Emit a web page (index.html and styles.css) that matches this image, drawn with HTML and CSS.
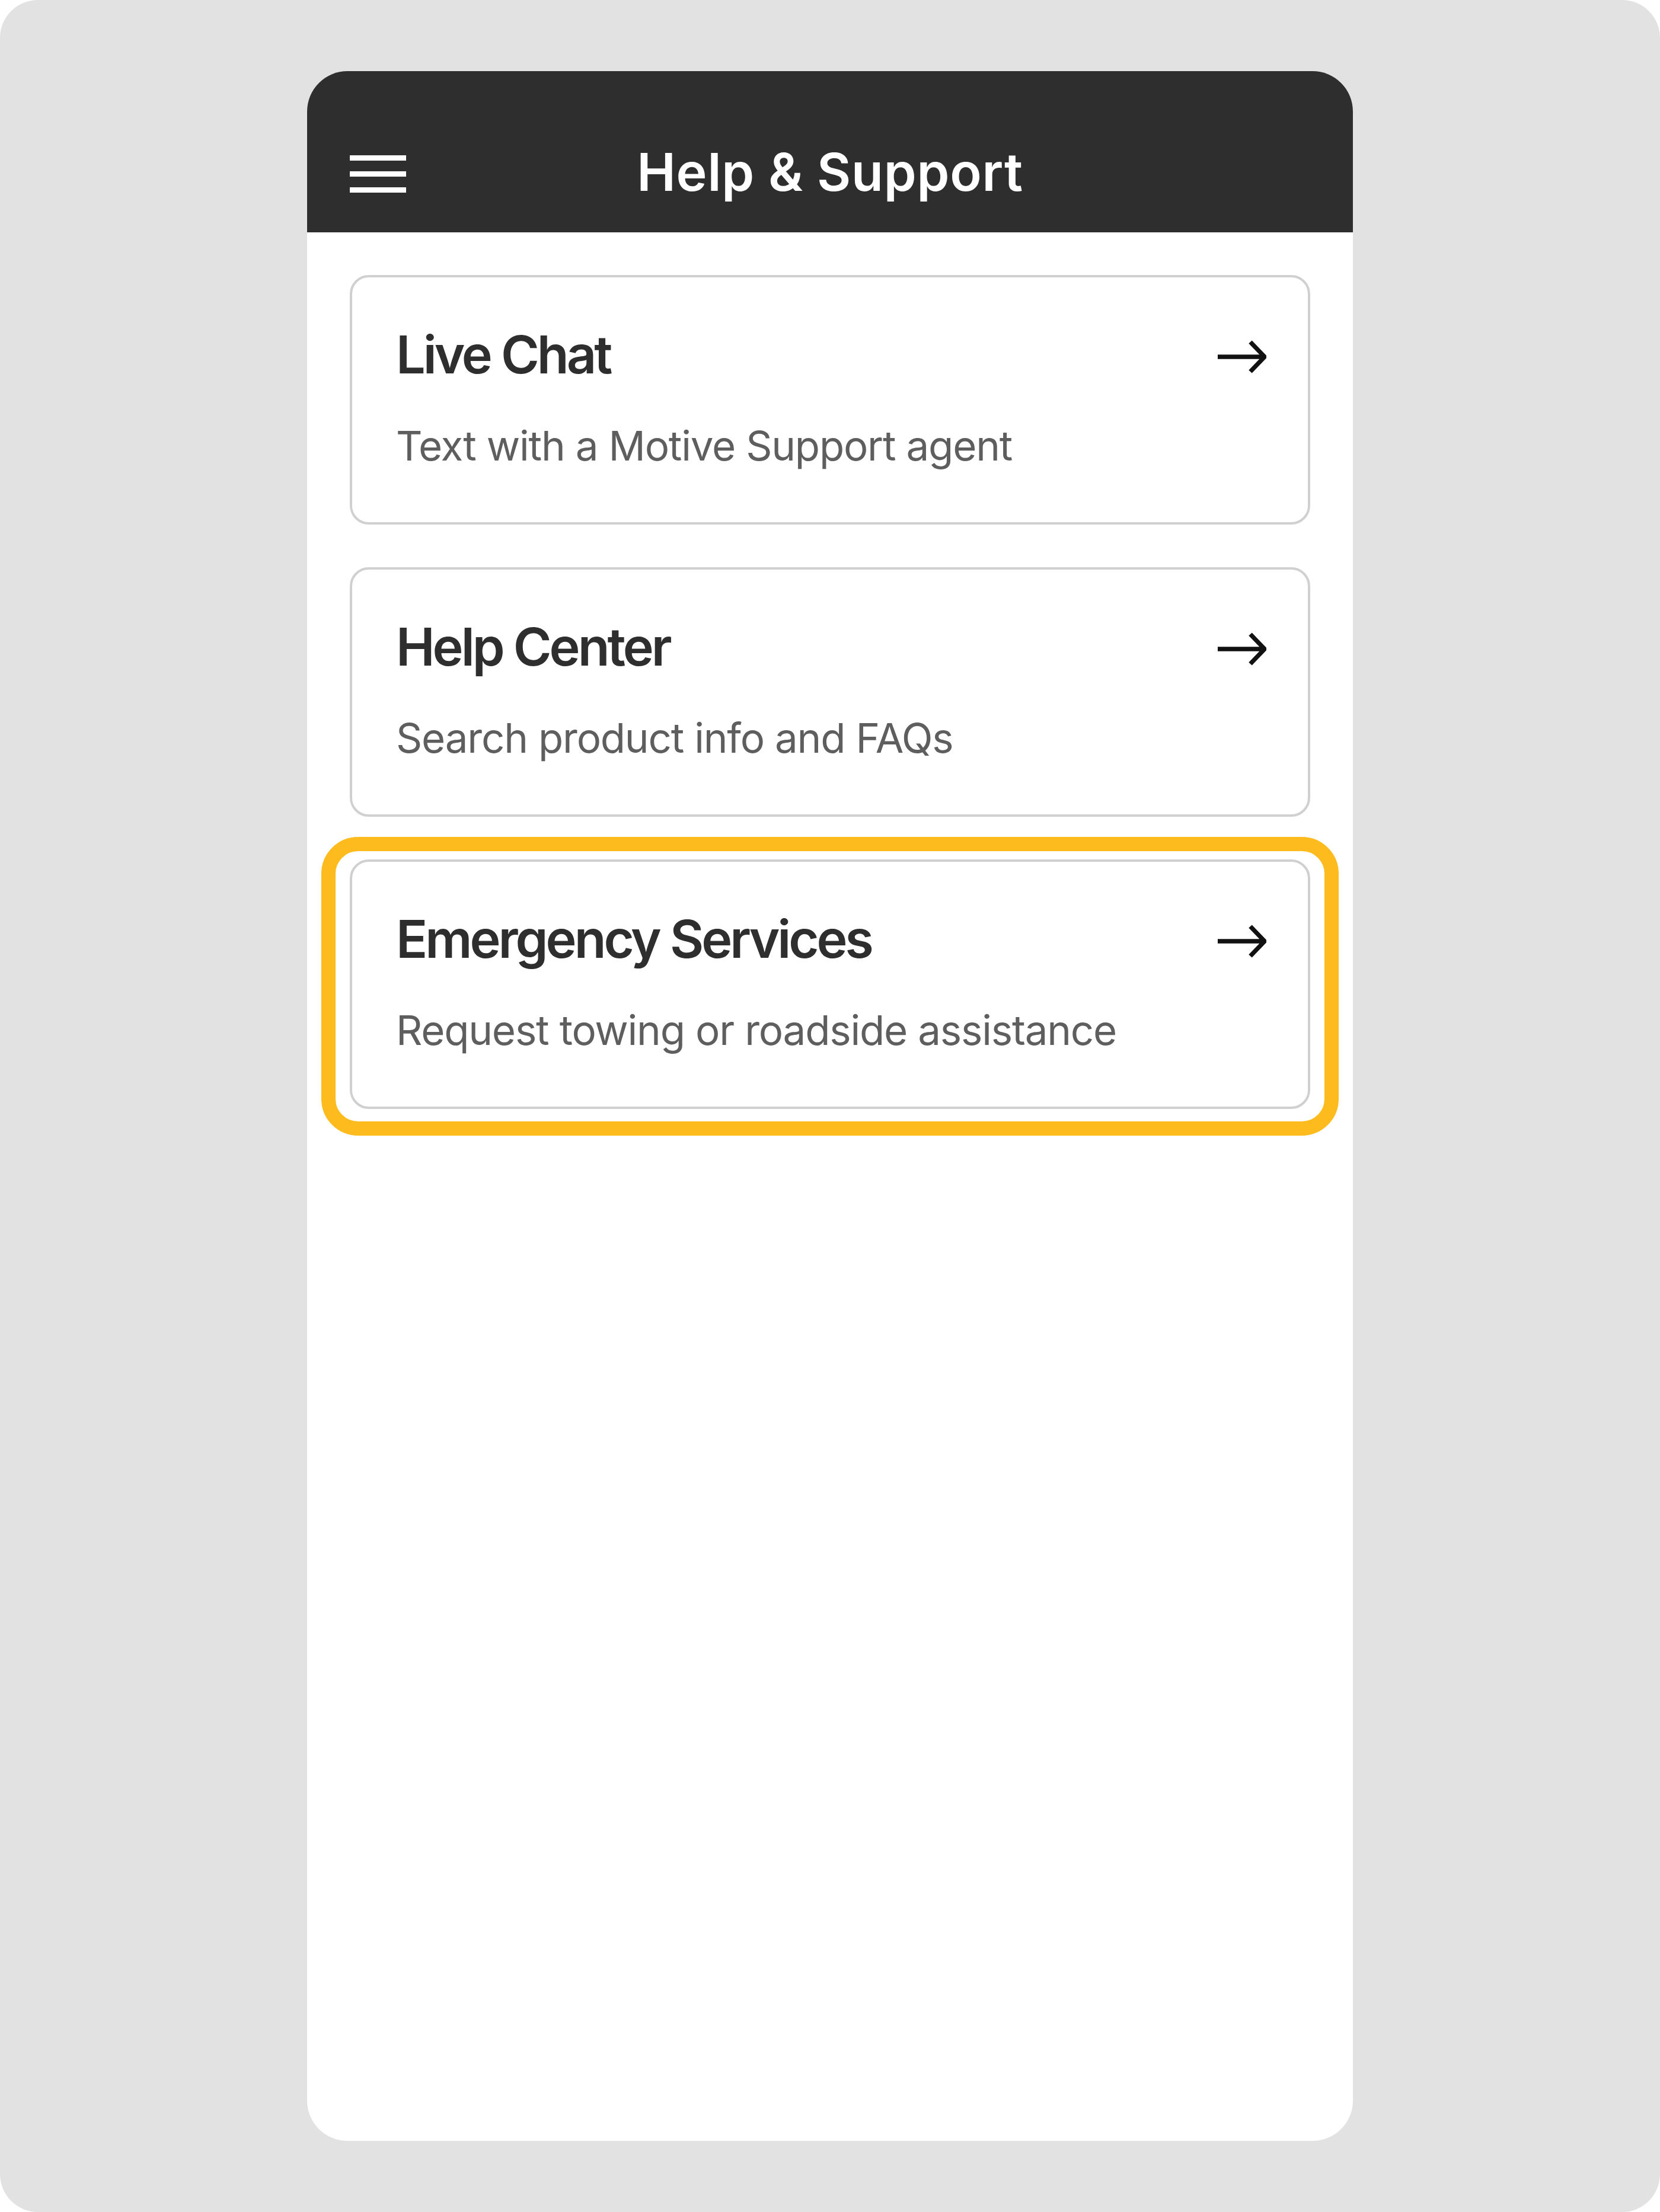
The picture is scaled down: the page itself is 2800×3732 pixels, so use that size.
FILE: index.html
```html
<!DOCTYPE html>
<html lang="en">
<head>
<meta charset="utf-8">
<title>Help &amp; Support</title>
<link rel="stylesheet" href="styles.css">
</head>
<body>
<div class="canvas">
  <div class="phone">
    <header class="topbar">
      <div class="menu" aria-label="Menu">
        <span class="menu-line"></span>
        <span class="menu-line"></span>
        <span class="menu-line"></span>
      </div>
      <h1 class="topbar-title">Help &amp; Support</h1>
      <div class="topbar-spacer"></div>
    </header>
    <main class="list">
      <a class="card">
        <div class="card-row">
          <span class="card-title">Live Chat</span>
          <svg class="arrow" viewBox="0 0 84 58" width="84" height="58"><path d="M2 29 H80 M57 4 L81 29 L57 54" fill="none" stroke="#111" stroke-width="7.5"/></svg>
        </div>
        <div class="card-sub">Text with a Motive Support agent</div>
      </a>
      <a class="card">
        <div class="card-row">
          <span class="card-title">Help Center</span>
          <svg class="arrow" viewBox="0 0 84 58" width="84" height="58"><path d="M2 29 H80 M57 4 L81 29 L57 54" fill="none" stroke="#111" stroke-width="7.5"/></svg>
        </div>
        <div class="card-sub">Search product info and FAQs</div>
      </a>
      <a class="card card-focus">
        <div class="card-row">
          <span class="card-title">Emergency Services</span>
          <svg class="arrow" viewBox="0 0 84 58" width="84" height="58"><path d="M2 29 H80 M57 4 L81 29 L57 54" fill="none" stroke="#111" stroke-width="7.5"/></svg>
        </div>
        <div class="card-sub">Request towing or roadside assistance</div>
        <span class="focus-ring"></span>
      </a>
    </main>
  </div>
</div>
</body>
</html>
```
FILE: styles.css
```css
* { box-sizing: border-box; }
html, body { margin: 0; padding: 0; background: #ffffff; }
body { font-family: Inter, "Noto Sans", sans-serif; }

.canvas {
  width: 2800px;
  height: 3732px;
  background: #e2e2e2;
  border-radius: 64px;
  padding-top: 120px;
  display: flex;
  justify-content: center;
  align-items: flex-start;
}

.phone {
  width: 1764px;
  height: 3492px;
  background: #ffffff;
  border-radius: 68px;
  overflow: hidden;
  display: flex;
  flex-direction: column;
}

.topbar {
  height: 272px;
  background: #2e2e2e;
  padding: 117px 72px 49px;
  display: grid;
  grid-template-columns: 1fr auto 1fr;
  align-items: center;
}

.menu {
  width: 95px;
  display: flex;
  flex-direction: column;
  gap: 18px;
  margin-top: 6px;
}
.menu-line {
  display: block;
  height: 9px;
  background: #ffffff;
}

.topbar-title {
  margin: 0;
  color: #ffffff;
  font-size: 88px;
  line-height: 106px;
  font-weight: 600;
  letter-spacing: 0.8px;
  white-space: nowrap;
}

.list {
  padding: 72px;
  display: flex;
  flex-direction: column;
  gap: 72px;
}

.card {
  position: relative;
  display: block;
  height: 421px;
  border: 4px solid #d0d0d0;
  border-radius: 32px;
  padding: 77px 70px 0 74px;
  color: inherit;
  text-decoration: none;
}

.card-row {
  display: flex;
  align-items: center;
  justify-content: space-between;
  height: 106px;
}

.card-title {
  font-size: 88px;
  line-height: 106px;
  font-weight: 600;
  letter-spacing: -4px;
  color: #2e2e2e;
  white-space: nowrap;
}

.arrow { display: block; flex: none; margin-top: 8px; }

.card-sub {
  margin-top: 59px;
  font-size: 69px;
  line-height: 84px;
  font-weight: 400;
  letter-spacing: -1.2px;
  color: #5e5e5e;
  white-space: nowrap;
}

.focus-ring {
  position: absolute;
  top: -42px;
  left: -52px;
  right: -52px;
  bottom: -49px;
  border: 24px solid #fdbb1e;
  border-radius: 62px;
  pointer-events: none;
}
```
